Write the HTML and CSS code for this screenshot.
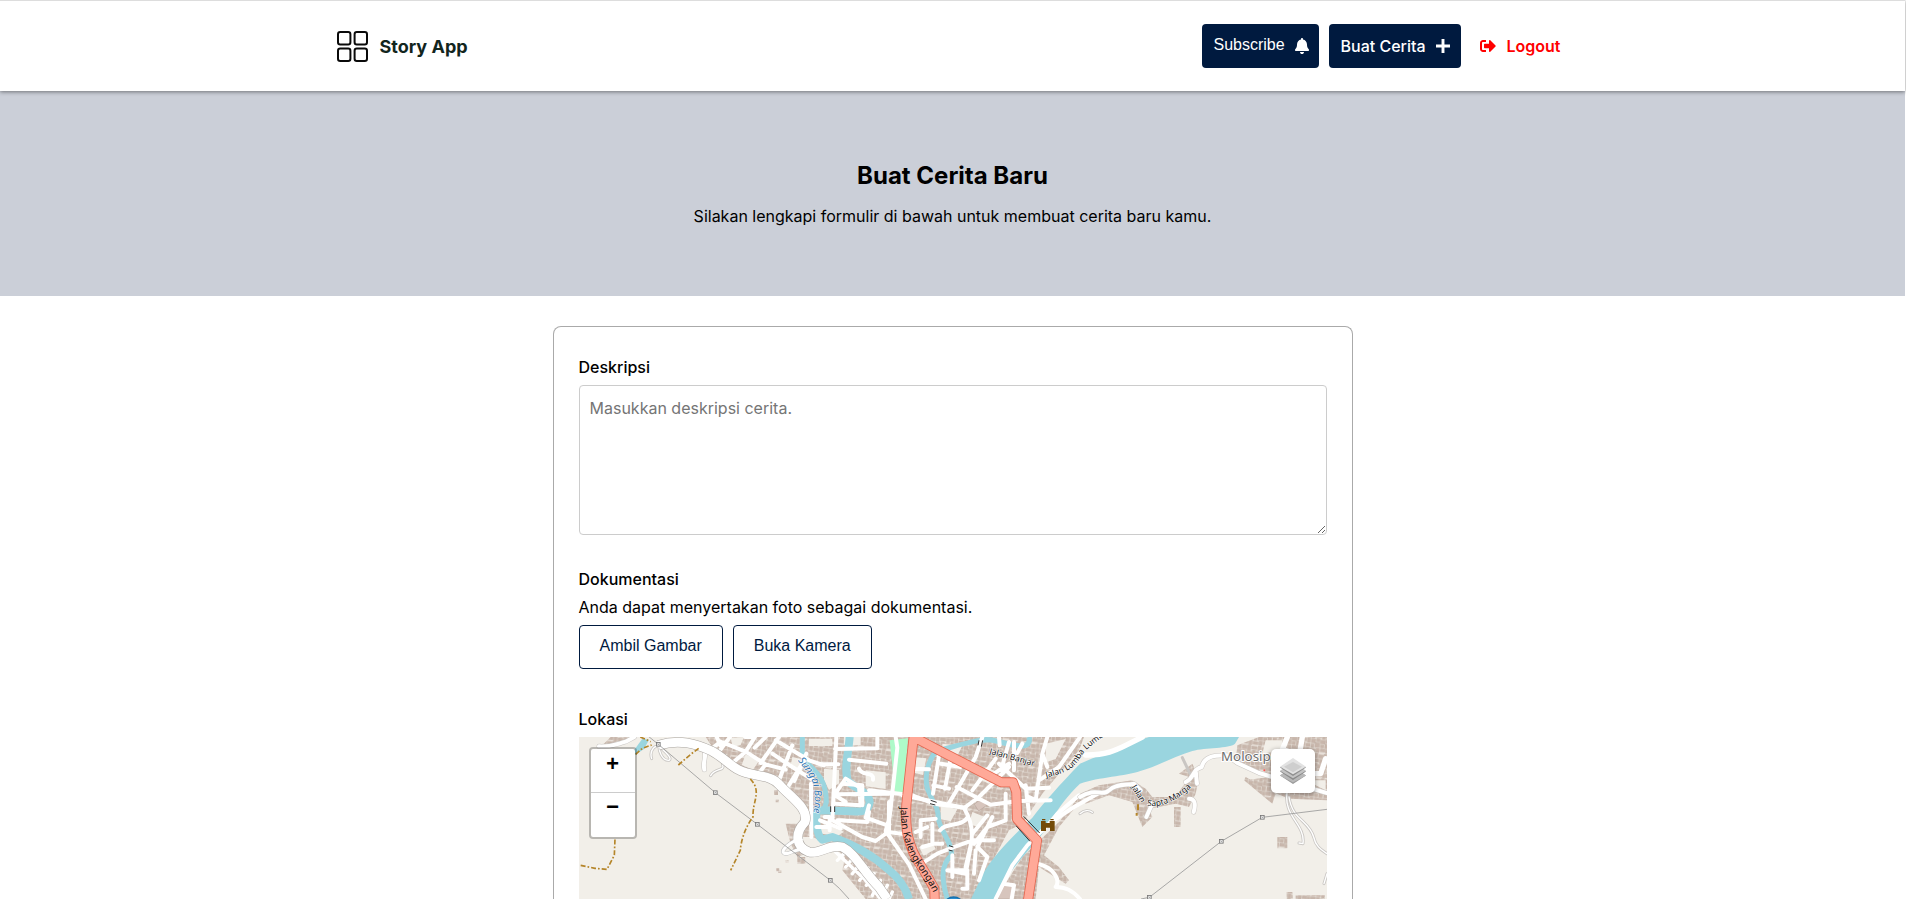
FILE: index.html
```html
<!DOCTYPE html>
<html lang="id">
<head>
<meta charset="utf-8">
<title>Story App</title>
<link rel="stylesheet" href="styles.css">
</head>
<body>
<header class="header">
  <div class="header-inner">
    <a class="brand">
      <svg class="brand-icon" viewBox="0 0 31 31" fill="none" stroke="#0a0a0a" stroke-width="2"><rect x="1" y="1" width="12.4" height="12.4" rx="2.2"/><rect x="17.6" y="1" width="12.4" height="12.4" rx="2.2"/><rect x="1" y="17.6" width="12.4" height="12.4" rx="2.2"/><rect x="17.6" y="17.6" width="12.4" height="12.4" rx="2.2"/></svg>
      <span>Story App</span>
    </a>
    <nav class="nav">
      <button class="btn subscribe"><span>Subscribe</span><svg class="bell" viewBox="0 0 448 512" fill="currentColor"><path d="M224 0c-17.700 0-32 14.300-32 32v19.200C119 66 64 130.600 64 208v18.800c0 47-17.300 92.400-48.500 127.600l-7.400 8.300c-8.400 9.400-10.400 22.900-5.300 34.400S19.400 416 32 416h384c12.600 0 24-7.400 29.200-18.900s3.100-25-5.300-34.400l-7.400-8.300C401.300 319.200 384 273.900 384 226.800V208c0-77.400-55-142-128-156.800V32c0-17.700-14.300-32-32-32zm45.300 493.300c12-12 18.700-28.300 18.700-45.300H160c0 17 6.700 33.300 18.700 45.300S207 512 224 512s33.300-6.700 45.300-18.700z"/></svg></button>
      <a class="btn create"><span>Buat Cerita</span><svg class="plus" viewBox="0 0 14 14" fill="none" stroke="currentColor" stroke-width="2.900"><path d="M7 0v14M0 7h14"/></svg></a>
      <a class="logout"><svg class="exit" viewBox="0 0 512 512" fill="currentColor"><path d="M497 273 329 441c-15 15-41 4.500-41-17v-96H152c-13.300 0-24-10.700-24-24v-96c0-13.300 10.700-24 24-24h136V88c0-21.400 25.900-32 41-17l168 168c9.300 9.400 9.300 24.600 0 34zM192 436v-40c0-6.600-5.400-12-12-12H96c-17.700 0-32-14.300-32-32V160c0-17.700 14.300-32 32-32h84c6.600 0 12-5.400 12-12V76c0-6.600-5.400-12-12-12H96c-53 0-96 43-96 96v192c0 53 43 96 96 96h84c6.600 0 12-5.400 12-12z"/></svg><span>Logout</span></a>
    </nav>
  </div>
</header>
<section class="hero">
  <h1>Buat Cerita Baru</h1>
  <p>Silakan lengkapi formulir di bawah untuk membuat cerita baru kamu.</p>
</section>
<form class="card">
  <label class="label">Deskripsi</label>
  <textarea class="desc" placeholder="Masukkan deskripsi cerita."></textarea>
  <div class="docs">
    <div class="label">Dokumentasi</div>
    <div class="hint">Anda dapat menyertakan foto sebagai dokumentasi.</div>
    <div class="doc-buttons"><button type="button" class="outline">Ambil Gambar</button><button type="button" class="outline">Buka Kamera</button></div>
  </div>
  <div class="label">Lokasi</div>
  <div class="map">
    <svg class="tiles" viewBox="0 0 2244 486">
      <defs>
        <pattern id="houses" width="86" height="74" patternUnits="userSpaceOnUse" patternTransform="rotate(7)">
          <rect width="86" height="74" fill="#e9e2db"/>
          <g fill="#c8b6ab" stroke="#bba89c" stroke-width="1">
            <path d="M1 2h13v11h-13zM16 1h10v16h-10zM29 3h16v9h-16zM48 1h9v13h-9zM60 4h13v10h-13zM75 1h9v12h-9zM2 16h10v13h-10zM15 20h15v9h-15zM32 15h10v15h-10zM45 17h16v10h-16zM64 17h9v14h-9zM75 16h10v9h-10zM1 33h16v9h-16zM20 32h9v13h-9zM32 33h13v12h-13zM48 30h10v10h-10zM60 34h15v11h-15zM77 28h8v14h-8zM3 45h11v12h-11zM17 48h13v9h-13zM33 48h8v11h-8zM44 43h14v14h-14zM61 48h10v9h-10zM74 45h11v13h-11zM1 60h15v10h-15zM19 60h9v13h-9zM31 62h15v9h-15zM49 60h10v12h-10zM62 60h14v9h-14zM78 61h7v11h-7z"/>
          </g>
        </pattern>
        <g id="pylon"><rect x="-5.500" y="-5.500" width="11" height="11" fill="#eee" stroke="#777" stroke-width="2.500"/><path d="M-3-3 3 3M3-3-3 3" stroke="#888" stroke-width="1.500"/></g>
        <path id="kalengkongan" d="M964 211C966 270 976 322 998 362C1022 402 1048 430 1070 482"/>
        <path id="bone" d="M656 70C680 100 700 125 705 152C709 185 706 215 698 256"/>
        <path id="banjar" d="M1230 50L1375 90"/>
        <path id="lumba" d="M1402 122C1440 112 1480 104 1504 62C1520 35 1545 20 1590 -14"/>
        <path id="marga1" d="M1657 150L1692 208"/>
        <path id="marga2" d="M1704 205C1752 214 1800 188 1846 142"/>
      </defs>
      <rect width="2244" height="486" fill="#f2efe9"/>

      <g fill="url(#houses)">
        <path d="M95 0h60l-40 22-50 8zM380 0H960V486H890L835 395 760 325 700 300 650 300 668 230 620 160 575 120 470 100 400 30z"/>
        <path d="M940 0H1515L1500 40 1390 170 1330 260 1290 280 1180 486H860L790 400 830 200z"/>
        <path d="M1440 255 1503 175 1550 150 1550 168 1495 205 1440 270 1395 355 1440 390 1470 430 1460 440 1380 390 1370 486H1250L1330 360z"/>
        <path d="M1503 170 1560 145 1660 130 1700 155 1720 180 1790 180 1830 120 1800 110 1840 80 1860 120 1850 170 1830 210 1790 200 1710 215 1720 240 1690 270 1660 195 1590 175 1520 200z"/>
        <path d="M1975 25 2040 0H2244V190L2130 185 2000 130 2070 120 1970 75zM2000 120 2090 170 2080 200 1995 130z"/>
        <path d="M1785 210h20v60h-20zM2095 300h30v34h-30zM2123 465h18v21h-18zM2150 475h88v11h-88z"/>
        <path d="M620 260l40 0 20 90-25 10-20-40zM585 160h12v14h-12zM590 188h10v8h-10zM598 400h9v8h-9zM592 394h9v9h-9zM655 360h24v20h-24zM620 370h9v7h-9z"/>
      </g>
      <g fill="#f2efe9">
        <path d="M455 2l40-2-10 24-24 6zM500 52l40 20-18 26-34-14zM690 5h70v22h-70zM640 60l40 10-14 40-32-20zM735 95l45 4v40l-30 20-15-30zM795 0h50v24h-50zM860 100l60 6v50l-60-8zM735 262l60 22-20 14-60-10zM1000 60l42 4-10 50-38-10zM1090 20l60 6-20 40-40-20zM1220 90l36 16-26 34-30-14zM1085 205l50 12-20 36-30-6zM1180 225l40 16-20 30-30-10zM1020 330l40-14 10 20-36 20zM1400 20l60-14-30 60-30 10zM2060 10h50v30l-60 10zM2180 130h60v30z"/>
      </g>
      <path d="M932 10 987 4 974 168 948 164z" fill="#aefac9"/>
      <path d="M1186 202l22-18 15 21-24 17zM1045 134l12-2 4 26-12 3zM1265 450l30-12 12 8-10 40h-40z" fill="#d7c5bd" stroke="#b8a89f" stroke-width="2"/>

      <g fill="none" stroke="#9ad5df" stroke-linejoin="round">
        <path stroke-width="24" d="M812 0C808 50 795 90 806 132C830 155 870 165 872 195C868 225 852 226 800 222L716 220C706 240 712 295 730 308L760 300C815 320 870 345 925 395C970 430 984 465 990 486"/>
        <path stroke-width="15" d="M670 0V54M675 70C722 110 742 138 742 196L733 222M1210 8C1140 22 1110 34 1071 42C1050 70 1035 110 1045 155L1062 192C1075 210 1078 225 1078 245C1084 283 1122 320 1117 355C1084 385 1088 430 1105 486"/>
        <path stroke-width="16" d="M1200 12C1230 0 1270 20 1315 26C1360 34 1350 0 1350 0"/>
      </g>
      <path d="M1176 486 1212 410C1252 345 1300 300 1360 242C1400 190 1440 145 1503 80C1560 55 1640 20 1710 0H1980L1968 20C1950 36 1880 30 1840 42C1780 60 1730 90 1684 102C1640 118 1560 120 1503 140C1430 210 1410 270 1375 310C1325 365 1270 430 1247 486z" fill="#9ad5df"/>
      <path d="M165 40 190 5 210 8 195 36 168 54z" fill="#9ad5df"/>

      <g fill="none" stroke="#c9c6c3" stroke-linejoin="round" stroke-linecap="round">
        <path stroke-width="9" d="M218 65C210 40 230 18 245 32C265 50 280 65 270 70C250 72 235 40 242 15M395 116C410 90 440 105 430 80M1503 230C1515 220 1530 218 1540 226M2125 160C2110 240 2180 260 2172 320L2160 318M2130 180C2140 250 2190 250 2204 300C2210 330 2230 340 2244 350M2235 440 2244 410M1810 62 1834 112"/>
        <path stroke="#fff" stroke-width="4" d="M218 65C210 40 230 18 245 32C265 50 280 65 270 70C250 72 235 40 242 15M395 116C410 90 440 105 430 80M1503 230C1515 220 1530 218 1540 226M2125 160C2110 240 2180 260 2172 320L2160 318M2130 180C2140 250 2190 250 2204 300C2210 330 2230 340 2244 350M2235 440 2244 410"/>
        <path stroke-width="15" d="M60 28C100 30 110 22 140 14L166 0M375 40C385 60 370 70 376 98"/>
      </g>

      <g fill="none" stroke="#fff" stroke-linejoin="round" stroke-linecap="round" stroke-width="12">
        <path d="M60 28C100 30 110 22 140 14L166 0M375 40C385 60 370 70 376 98M380 50 425 14M413 0 424 25M453 0 424 38M498 0 528 0 500 44 452 85M420 12 500 44 560 82 620 98M600 0 545 78M590 10 690 70 735 85M640 25 600 130M682 50 646 132M560 82 538 110M680 65C655 100 640 130 620 160M696 140 697 300M580 50 640 90 700 128M712 270h35M737 240h15v40M527 32 560 0"/>
        <path d="M895 0 895 34 768 36M810 68 922 80M840 95C850 120 885 100 882 128M770 172 930 170M772 0 760 250 850 300 890 312 927 285 980 292M772 165 800 125 840 150 845 205 770 200M768 175 800 195M870 205 860 242 925 265M775 250 865 255 870 225M950 0 955 32 932 240 920 282 990 382 1040 486"/>
        <path d="M723 82h55M723 250 785 275M790 140 850 145 850 205M990 95 1050 97M870 160 1000 175 1065 200 1160 212M930 195 930 285"/>
        <path d="M970 175 1125 206 1155 213 1200 180 1290 90M1210 0 1190 60 1133 160 1108 202M1080 55 1062 170M1115 65 1098 155M1085 80 1145 90M1063 145 1110 155M1133 150 1235 203 1320 192 1415 190M1155 213C1180 255 1183 290 1175 325L1160 390M1164 243C1150 270 1100 255 1083 280M1290 15 1266 100M1250 65 1210 120 1180 160M1260 80 1340 155 1410 152M1245 110 1290 80M1280 170V250M1305 100V15M1260 0 1262 25M1340 145 1350 230M1330 20 1315 48M1240 240 1195 330 1225 360 1200 430M1225 235 1180 290M1280 250 1225 270 1185 320M1245 310 1180 310 1120 332 1075 350 1015 388M1175 330 1160 410 1105 400M1105 400H1165V455H1150M1120 355V420M1190 340 1185 410M1070 245 1025 250V300M1010 285 1045 270M1060 260V320H1090M1030 330 1065 320"/>
        <path d="M1250 486 1300 385 1345 325M1345 325 1410 260 1435 230 1500 175M1375 380C1425 390 1445 430 1430 450C1460 450 1480 460 1503 486M1273 440 1305 445 1298 486M1380 130 1440 90 1503 0M1405 90 1390 50 1405 0M1390 50 1370 190 1350 180M1410 260 1485 210 1560 168"/>
        <path stroke="#ccc8c4" stroke-width="15" d="M1503 180C1550 150 1570 180 1590 160C1610 140 1640 145 1665 140L1685 160M1720 200 1702 240M1820 135C1850 120 1835 100 1868 90C1875 60 1900 54 1945 55L1975 78 2040 108 2244 168M1850 100 1854 140M1830 185C1850 185 1850 205 1844 225"/>
        <path d="M1503 180C1550 150 1570 180 1590 160C1610 140 1640 145 1665 140L1685 160M1720 200 1702 240M1820 135C1850 120 1835 100 1868 90C1875 60 1900 54 1945 55L1975 78 2040 108 2244 168M1850 100 1854 140M1830 185C1850 185 1850 205 1844 225"/>
        <path stroke-width="16" d="M1520 54C1580 55 1610 40 1640 25L1690 0M2125 0 2110 38 2150 50M2170 0 2164 35M2200 110H2225L2240 65"/>
        <path stroke-width="10" d="M770 345 860 430 905 486M800 345 775 370M825 360 800 390M847 375 820 410M867 393 842 430M885 410 862 445M905 430 880 475M925 445 905 486M940 465 930 486"/>
      </g>
      <g fill="none" stroke-linejoin="round">
        <path d="M238 25C300 5 350 20 398 42C430 58 455 88 480 99C520 120 575 110 603 145C640 185 690 215 678 255C645 290 650 330 690 345C720 354 750 320 790 330C830 350 850 400 900 450L925 486" stroke="#aaa5a0" stroke-width="30"/>
        <path d="M670 310C650 300 610 335 612 345C620 360 640 340 660 338" stroke="#bbb" stroke-width="12"/>
        <path d="M238 25C300 5 350 20 398 42C430 58 455 88 480 99C520 120 575 110 603 145C640 185 690 215 678 255C645 290 650 330 690 345C720 354 750 320 790 330C830 350 850 400 900 450L925 486" stroke="#fff" stroke-width="27"/>
        <path d="M670 310C650 300 610 335 612 345C620 360 640 340 660 338" stroke="#fff" stroke-width="9"/>
      </g>

      <path d="M186-20 238 22 409 167 535 262 754 430Q780 450 810 486M1686 486 1711 481 1927 313 2050 241 2244 217" fill="none" stroke="#999" stroke-width="2.500"/>
      <g fill="none" stroke="#b58529" stroke-width="5" stroke-dasharray="15 6 5 6">
        <path d="M5 385 48 394 84 397 106 355 108 305M359 34 335 52 298 84M514 126C550 165 520 190 522 240C495 275 485 320 484 340L455 400M170 52 190 34 218 24M184 0 215 14"/>
      </g>
      <path d="M1677 202v18M1673 228v8" stroke="#b58529" stroke-width="6"/>

      <g fill="none" stroke-linejoin="round">
        <path stroke="#e4664f" stroke-width="30" d="M1067 490 1066 455C1020 370 1000 360 985 290C980 250 980 210 985 175L1004 0 1070 35 1267 136H1302L1312 165 1314 246 1374 310 1347 490"/>
        <path stroke="#ffa998" stroke-width="25" d="M1067 490 1066 455C1020 370 1000 360 985 290C980 250 980 210 985 175L1004 0 1070 35 1267 136H1302L1312 165 1314 246 1374 310 1347 490"/>
        <path d="M1311 266 1353 313M1334 238 1382 288M1200 10 1197 25M1211 10 1207 29M755 208v17M767 208v17M1055 190l18 6M1053 200l16 4M1110 326l13 4M1109 339l12 3" stroke="#333" stroke-width="3"/>
      </g>

      <use href="#pylon" x="238" y="22"/><use href="#pylon" x="409" y="167"/><use href="#pylon" x="535" y="262"/><use href="#pylon" x="754" y="430"/><use href="#pylon" x="1711" y="481"/><use href="#pylon" x="1927" y="313"/><use href="#pylon" x="2050" y="241"/>
      <path d="M1386 252h14v6h12v-6h15v30h-14v-10h-12v10h-15zM1389 246h10v4h-10zM1414 246h10v4h-10z" fill="#734a08"/>
      <circle cx="2056" cy="100" r="3" fill="#ff5555"/>
      <ellipse cx="1124" cy="500" rx="26" ry="20" fill="#298ccf" stroke="#1470ad" stroke-width="4"/>

      <g class="road-label">
        <text class="k-label"><textPath href="#kalengkongan">Jalan Kalengkongan</textPath></text>
        <text class="river-label"><textPath href="#bone">Sungai Bone</textPath></text>
        <text><textPath href="#banjar">Jalan Banjar</textPath></text>
        <text><textPath href="#lumba">Jalan Lumba Lumb</textPath></text>
        <text><textPath href="#marga1">Jalan</textPath></text>
        <text><textPath href="#marga2">Sapta Marga</textPath></text>
      </g>
      <text class="place-label" x="1926" y="71">Molosip</text>
    </svg>
    <div class="zoom-control"><a>+</a><a>−</a></div>
    <div class="layers"><svg viewBox="0 0 26 26"><path d="M0 17.500 13 9l13 8.500L13 26z" fill="#999"/><path d="M0 17.500 13 9l13 8.500-13 7z" fill="#b8b8b8"/><path d="M0 13.500 13 5l13 8.500L13 22z" fill="#8a8a8a"/><path d="M0 12.800 13 4l13 8.800-13 7.500z" fill="#c3c3c3"/><path d="M0 9.500 13 1l13 8.500L13 18z" fill="#8f8f8f"/><path d="M0 8.700 13 0l13 8.700-13 7.600z" fill="#e2e2e2"/><path d="M4 8.700 13 4l9 4.700-9 5.500z" fill="#cecece"/></svg></div>
  </div>
</form>
</body>
</html>
```
FILE: styles.css
```css
* { box-sizing: border-box; }
body {
  margin: 0;
  padding-right: 1px;
  height: 100vh;
  overflow: hidden;
  font: 16px/24px Inter, sans-serif;
  color: #000;
  background: #fff;
}
.header {
  position: relative;
  height: 91px;
  border-top: 1px solid #ddd;
  background: #fff;
  box-shadow: 0 1px 4px rgba(0, 0, 0, .45);
}
.header-inner {
  width: 1232px;
  height: 90px;
  margin: 0 auto;
  display: flex;
  align-items: center;
  justify-content: space-between;
}
.brand {
  display: flex;
  align-items: center;
  gap: 12px;
  font-size: 18px;
  font-weight: 700;
  color: #12251d;
}
.brand span { padding-top: 1px; }
.brand-icon { width: 31px; height: 31px; }
.nav { display: flex; align-items: center; gap: 10px; }
.btn {
  height: 44px;
  display: flex;
  align-items: center;
  border: 0;
  border-radius: 4px;
  background: #001a3f;
  color: #fff;
}
.subscribe {
  width: 117px;
  padding: 0 10px 0 12px;
  justify-content: space-between;
  font: 16px/18px "Liberation Sans", Arial, sans-serif;
}
.subscribe span { padding-bottom: 3px; }
.bell { width: 14px; height: 16px; }
.create {
  width: 132px;
  padding: 0 11px 0 12px;
  justify-content: space-between;
  font-weight: 500;
}
.plus { width: 14px; height: 14px; }
.logout {
  display: flex;
  align-items: center;
  gap: 11px;
  padding: 0 8px 0 9px;
  font-weight: 600;
  color: #f00;
}
.exit { width: 16px; height: 16px; }
.hero {
  height: 205px;
  padding-top: 70px;
  background: #cbcfd8;
  text-align: center;
}
.hero h1 { margin: 0; font-size: 24px; line-height: 29px; font-weight: 700; }
.hero p { margin: 14px 0 0; }
.card {
  width: 800px;
  height: 573px;
  margin: 30px auto 0;
  padding: 28px 25px 0;
  border: 1px solid #aaa;
  border-bottom: 0;
  border-radius: 8px 8px 0 0;
}
.label { display: block; font-weight: 500; }
.desc {
  display: block;
  width: 100%;
  height: 150px;
  margin-top: 6px;
  padding: 10px;
  border: 1px solid #ccc;
  border-radius: 4px;
  font: 16px/24px Inter, sans-serif;
}
.docs { padding: 32px 0 38px; }
.hint { margin-top: 4px; }
.doc-buttons { display: flex; gap: 10px; margin-top: 6px; }
.outline {
  height: 44px;
  padding: 0 20px 3px;
  border: 1px solid #001a3f;
  border-radius: 4px;
  background: #fff;
  color: #001a3f;
  font: 16px/19px "Liberation Sans", Arial, sans-serif;
}
.map {
  position: relative;
  height: 162px;
  margin-top: 6px;
  overflow: hidden;
  background: #f2efe9;
}
.tiles { display: block; width: 748px; height: 162px; }
.road-label {
  font: 25px "Noto Sans", sans-serif;
  fill: #111;
  stroke: #fff;
  stroke-width: 3px;
  paint-order: stroke;
}
.k-label { font-size: 30px; stroke: none; }
.river-label { font-size: 31px; font-style: italic; fill: #3478b5; }
.place-label {
  font: 40px "Noto Sans", sans-serif;
  fill: #6c6c6c;
  stroke: #fff;
  stroke-width: 6px;
  paint-order: stroke;
}
.zoom-control {
  position: absolute;
  top: 10px;
  left: 10px;
  width: 48px;
  border: 2px solid rgba(0, 0, 0, .24);
  border-radius: 4px;
  background: #fff;
  background-clip: padding-box;
}
.zoom-control a {
  display: block;
  height: 44px;
  font: bold 22px/32px "Liberation Mono", monospace;
  text-align: center;
}
.zoom-control a:first-child { line-height: 33px; border-bottom: 1px solid #ccc; }
.layers {
  position: absolute;
  top: 12px;
  right: 12px;
  width: 44px;
  height: 44px;
  display: flex;
  align-items: center;
  justify-content: center;
  border-radius: 5px;
  background: #fff;
  box-shadow: 0 1px 5px rgba(0, 0, 0, .4);
}
.layers svg { width: 26px; height: 26px; }
```
